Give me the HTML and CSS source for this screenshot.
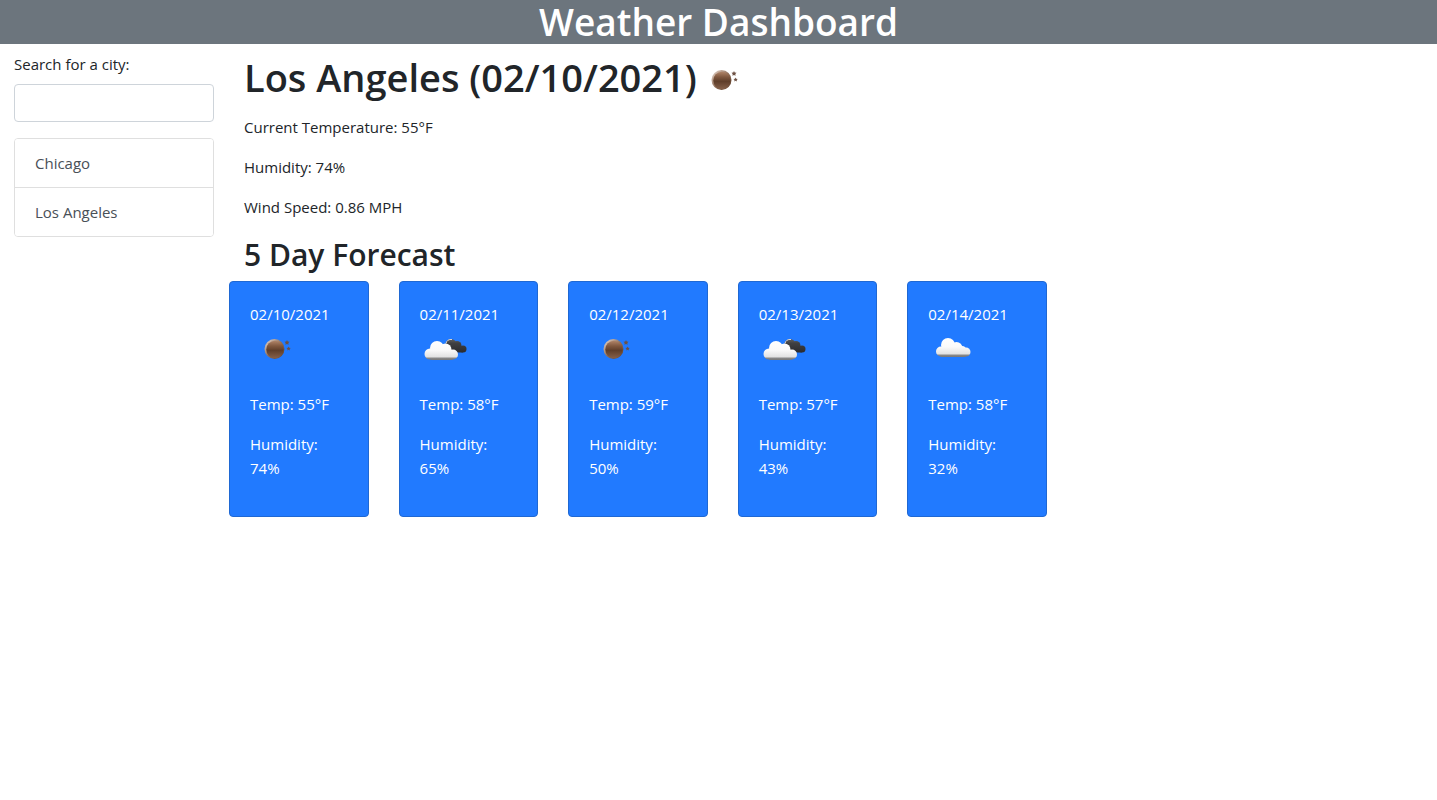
FILE: index.html
```html
<!DOCTYPE html>
<html lang="en">
<head>
<meta charset="utf-8">
<title>Weather Dashboard</title>
<link rel="stylesheet" href="styles.css">
</head>
<body>
<svg class="sprite" aria-hidden="true">
  <defs>
    <linearGradient id="bronze" x1="0" y1="0" x2="0" y2="1">
      <stop offset="0" stop-color="#b08468"/><stop offset=".3" stop-color="#80583f"/><stop offset=".55" stop-color="#5f3e2a"/><stop offset="1" stop-color="#85604a"/>
    </linearGradient>
    <linearGradient id="rim" x1="0" y1="0" x2="1" y2="1">
      <stop offset="0" stop-color="#efe0d6"/><stop offset=".5" stop-color="#906f59"/><stop offset="1" stop-color="#593b28"/>
    </linearGradient>
    <linearGradient id="white" gradientUnits="userSpaceOnUse" x1="0" y1="14" x2="0" y2="34">
      <stop offset="0" stop-color="#fff"/><stop offset=".5" stop-color="#fafafa"/><stop offset=".85" stop-color="#e2e2e2"/><stop offset=".9" stop-color="#8a8a8a"/><stop offset="1" stop-color="#777"/>
    </linearGradient>
    <linearGradient id="dark" gradientUnits="userSpaceOnUse" x1="0" y1="13" x2="0" y2="27">
      <stop offset="0" stop-color="#606062"/><stop offset=".3" stop-color="#404042"/><stop offset="1" stop-color="#2a2a2d"/>
    </linearGradient>
    <symbol id="clear" viewBox="0 0 50 50">
      <circle cx="24.500" cy="23" r="10" fill="url(#rim)"/>
      <circle cx="25" cy="23.500" r="8.700" fill="url(#bronze)"/>
      <path d="M37 14l.7 1.500 1.800.2-1.200 1.300.3 1.700-1.600-.8-1.600.8.3-1.700-1.200-1.300 1.800-.2zM38.600 20.500l.6 1.200 1.500.2-1 1 .2 1.500-1.300-.7-1.300.7.2-1.500-1-1 1.500-.2z" fill="#6d5143"/>
    </symbol>
    <symbol id="cloudy" viewBox="0 0 50 50">
      <g fill="url(#dark)">
        <circle cx="31" cy="18.500" r="5.500"/><circle cx="37" cy="19.500" r="4.500"/><circle cx="43" cy="23" r="3.500"/><path d="M26 18h12l5 8.500H32z"/>
      </g>
      <path d="M26 17.500c.5-3 3-4.500 6-4" fill="none" stroke="#d5d5d5"/>
      <g fill="url(#white)">
        <circle cx="10" cy="28" r="5.500"/><circle cx="17" cy="22" r="7"/><circle cx="25.500" cy="23.500" r="6"/><circle cx="33" cy="28.500" r="5"/><path d="M10 24l8-2 15 3v8.500q-2 .5-4 .5H14q-3 0-4-.5z"/>
      </g>
    </symbol>
    <symbol id="cloud" viewBox="0 0 50 50">
      <g fill="url(#white)" transform="translate(0 -3)">
        <circle cx="13" cy="28.500" r="5"/><circle cx="20" cy="22" r="7"/><circle cx="28.500" cy="25" r="6"/><circle cx="34" cy="27" r="4"/><circle cx="38" cy="29" r="4.500"/><path d="M12 24h21l5 3v6.500q-2 .5-4 .5H16q-2 0-4-.5z"/>
      </g>
    </symbol>
  </defs>
</svg>
<header class="banner"><h1>Weather Dashboard</h1></header>
<div class="layout">
  <aside class="sidebar">
    <label for="city">Search for a city:</label>
    <input id="city" class="search" type="text">
    <div class="cities">
      <button type="button">Chicago</button>
      <button type="button">Los Angeles</button>
    </div>
  </aside>
  <main class="content">
    <section class="current">
      <h2 class="place">Los Angeles (02/10/2021)<svg class="icon"><use href="#clear"/></svg></h2>
      <p>Current Temperature: 55°F</p>
      <p>Humidity: 74%</p>
      <p>Wind Speed: 0.86 MPH</p>
      <h3 class="subtitle">5 Day Forecast</h3>
    </section>
    <section class="forecast">
      <article class="card"><h4>02/10/2021</h4><svg class="icon"><use href="#clear"/></svg><p>Temp: 55°F</p><p>Humidity: 74%</p></article>
      <article class="card"><h4>02/11/2021</h4><svg class="icon"><use href="#cloudy"/></svg><p>Temp: 58°F</p><p>Humidity: 65%</p></article>
      <article class="card"><h4>02/12/2021</h4><svg class="icon"><use href="#clear"/></svg><p>Temp: 59°F</p><p>Humidity: 50%</p></article>
      <article class="card"><h4>02/13/2021</h4><svg class="icon"><use href="#cloudy"/></svg><p>Temp: 57°F</p><p>Humidity: 43%</p></article>
      <article class="card"><h4>02/14/2021</h4><svg class="icon"><use href="#cloud"/></svg><p>Temp: 58°F</p><p>Humidity: 32%</p></article>
    </section>
  </main>
</div>
</body>
</html>
```
FILE: styles.css
```css
* { box-sizing: border-box; }
body {
  margin: 0;
  background: #fff;
  color: #212529;
  font: 400 15px/24px "Segoe UI", "Open Sans", "Noto Sans", sans-serif;
}
h1, h2, h3, h4, p { margin: 0; }
.sprite { position: absolute; width: 0; height: 0; }
.icon { display: block; flex: none; width: 50px; height: 50px; }
.banner { background: #6c757d; color: #fff; text-align: center; }
.banner h1 { font-size: 37px; line-height: 44px; font-weight: 600; }
.layout { display: flex; align-items: flex-start; }
.sidebar { flex: none; width: 229px; padding: 8px 15px 0 14px; }
.sidebar label { display: block; margin-bottom: 8px; }
.search {
  display: block;
  width: 100%;
  height: 38px;
  margin-bottom: 16px;
  padding: 6px 12px;
  border: 1px solid #ced4da;
  border-radius: 4px;
  font: inherit;
}
.cities { border: 1px solid #dfdfdf; border-radius: 4px; overflow: hidden; }
.cities button {
  display: block;
  width: 100%;
  padding: 12px 20px;
  border: 0;
  background: #fff;
  color: #495057;
  font: inherit;
  text-align: left;
}
.cities button + button { border-top: 1px solid #dfdfdf; }
.content { flex: 1; padding-top: 8px; }
.current { padding: 0 15px; }
.current p { margin-bottom: 16px; }
.place {
  display: flex;
  align-items: flex-start;
  margin-bottom: 8px;
  font-size: 38px;
  line-height: 50px;
  font-weight: 600;
}
.place .icon { margin-top: 5px; }
.subtitle { margin-bottom: 6px; font-size: 30px; line-height: 40px; font-weight: 600; }
.forecast {
  display: grid;
  grid-template-columns: repeat(5, 1fr);
  gap: 30px;
  width: 67.7%;
}
.card {
  padding: 20px 20px 36px;
  border: 1px solid #1f68d3;
  border-radius: 4px;
  background: #217aff;
  color: #fff;
}
.card h4 { font-size: 15px; font-weight: 400; }
.card p { margin-top: 16px; }
```
